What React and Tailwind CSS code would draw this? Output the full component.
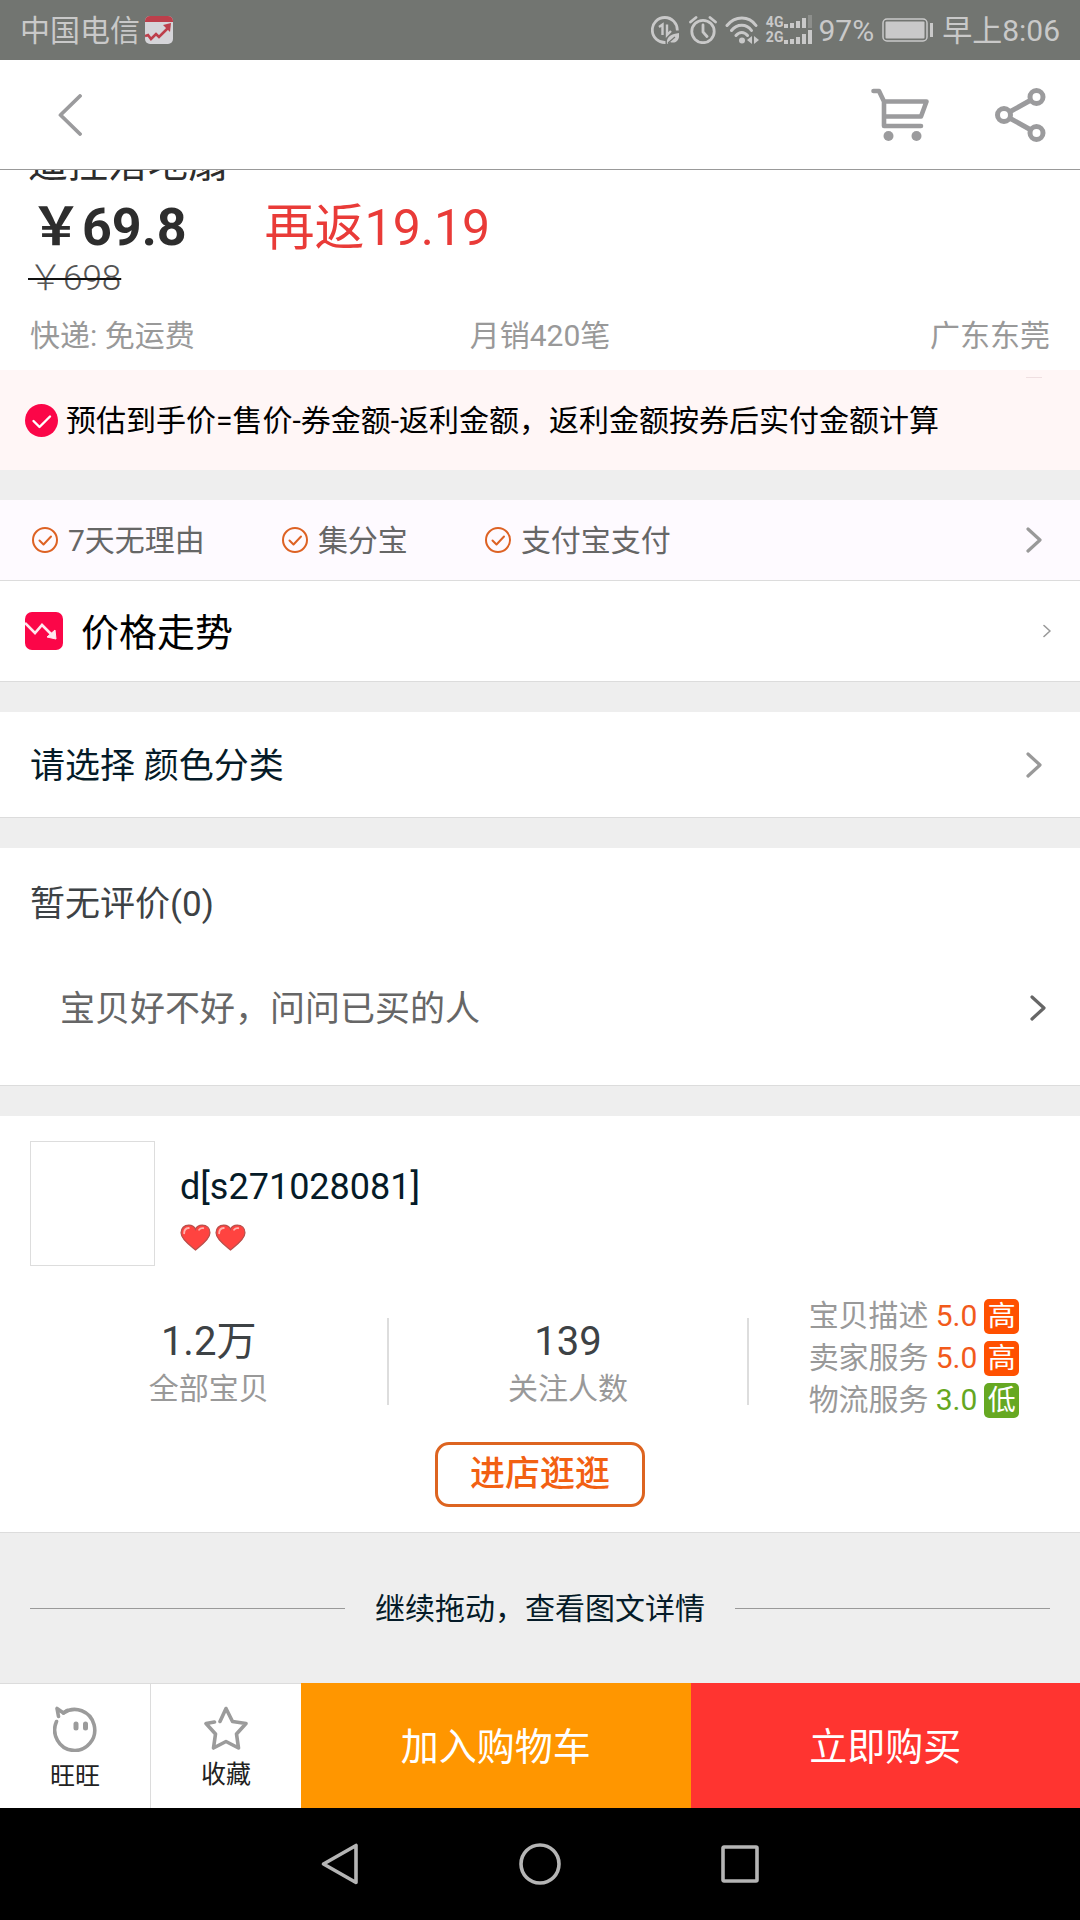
import React from 'react';

const services = ['7天无理由', '集分宝', '支付宝支付'];

const ratings = [
  { label: '宝贝描述', score: '5.0', level: '高', good: true },
  { label: '卖家服务', score: '5.0', level: '高', good: true },
  { label: '物流服务', score: '3.0', level: '低', good: false },
];

const stats = [
  { value: '1.2万', label: '全部宝贝' },
  { value: '139', label: '关注人数' },
];

const Chevron = ({ className }) => (
  <svg className={className} viewBox="0 0 16 26" fill="none" stroke="currentColor" strokeWidth="3.2" strokeLinecap="round" strokeLinejoin="round">
    <path d="M2 2l12 11L2 24" />
  </svg>
);

const Heart = () => (
  <svg className="w-[31px] h-[27px]" viewBox="0 0 30 26">
    <path d="M15 25C10 21 1 15 1 8.500C1 4 4 1 8.500 1C11.500 1 14 2.500 15 5C16 2.500 18.500 1 21.500 1C26 1 29 4 29 8.500C29 15 20 21 15 25Z" fill="#ff4340" stroke="#b8504c" strokeWidth="1.200" />
    <path d="M4 9C4 6 5.500 4 8.500 3.800M18.500 5.500C19.500 4.200 21 3.800 22.500 4" fill="none" stroke="#ffb3ae" strokeWidth="1.800" strokeLinecap="round" />
  </svg>
);

const StatusBar = () => (
  <div className="h-[60px] shrink-0 bg-[#727571] text-[#c9c9c9] text-[30px] leading-[40px] flex items-center pl-5 pr-5">
    <span className="pt-0.5">中国电信</span>
    <svg className="w-7 h-7 ml-[5px]" viewBox="0 0 28 28">
      <rect width="28" height="28" rx="5" fill="#d5d5d9" />
      <path d="M0 6V5a5 5 0 0 1 5-5h18a5 5 0 0 1 5 5v1z" fill="#bd3f4b" />
      <path d="M0 20l3-1 3 4 5-5 3 3 9-9" fill="none" stroke="#bd3f4b" strokeWidth="2.600" />
      <path d="M18 9l8-2-1 9z" fill="#bd3f4b" />
    </svg>
    <div className="flex-1" />
    {/* data saver */}
    <svg className="w-7 h-7" viewBox="0 0 28 28" fill="none" stroke="currentColor" strokeWidth="2.800">
      <path d="M26.300 14.500A12.500 12.500 0 1 0 14.500 26.500" />
      <path d="M8 11l3.500-2.500V19M16 8.500V19l4-4" strokeWidth="2.400" />
      <path d="M16 28c-1-7 4-10 12-11c1 7-3 11-9 9z" fill="currentColor" stroke="none" />
      <path d="M17 27l7-6" stroke="#727571" strokeWidth="1.200" />
    </svg>
    {/* alarm */}
    <svg className="w-7 h-7 ml-[10px]" viewBox="0 0 28 28" fill="none" stroke="currentColor" strokeWidth="2.800" strokeLinecap="round">
      <circle cx="14" cy="15.500" r="11.200" />
      <path d="M1.500 6L7 1.500M26.500 6L21 1.500M14 9v7l4 4.500" />
    </svg>
    {/* wifi */}
    <svg className="w-[34px] h-7 ml-2" viewBox="0 0 34 28" fill="none" stroke="currentColor" strokeWidth="3" strokeLinecap="round">
      <path d="M2 9.500C10-.5 24-.5 31 9.500M6.500 14.500c5.500-7 15-7 20 0M11 19.500c3.500-4 8-4 11.500 0" />
      <circle cx="17" cy="24.500" r="3" fill="currentColor" stroke="none" />
      <path d="M27 20v8l-5-4zM29 20v8l5-4z" fill="currentColor" stroke="none" />
    </svg>
    <div className="ml-[7px] flex flex-col text-[14px] leading-[15px] font-bold">
      <span>4G</span>
      <span>2G</span>
    </div>
    <svg className="w-[30px] h-[30px]" viewBox="0 0 30 30" fill="currentColor">
      <path d="M1 9h4v4H1zM7 8h4v5H7zM13 6h4v7h-4zM19 3h4v10h-4zM1 25h4v4H1zM7 24h4v5H7zM13 22h4v7h-4zM19 19h4v10h-4zM25 15h4v14h-4z" />
      <path d="M25 0h4v13h-4z" fill="#8d8f8c" />
    </svg>
    <span className="ml-[5px] pt-0.5">97%</span>
    <svg className="w-[52px] h-6 ml-2" viewBox="0 0 52 24">
      <rect x="1" y="1" width="44" height="22" rx="4" fill="none" stroke="currentColor" strokeWidth="1.500" />
      <rect x="3.500" y="3.500" width="39" height="17" rx="1" fill="currentColor" />
      <rect x="48" y="5" width="3" height="14" fill="currentColor" />
    </svg>
    <span className="ml-2 pt-0.5">早上8:06</span>
  </div>
);

const Header = () => (
  <header className="h-[110px] shrink-0 bg-white border-b border-[#999999] text-[#9b9b9d] flex items-center pl-[58px] pr-[34px]">
    <button aria-label="返回">
      <svg className="w-6 h-[42px]" viewBox="0 0 24 42" fill="none" stroke="currentColor" strokeWidth="3.800" strokeLinecap="round" strokeLinejoin="round">
        <path d="M22 2L2.500 21L22 40" />
      </svg>
    </button>
    <div className="flex-1" />
    <button aria-label="购物车">
      <svg className="w-[58px] h-[54px]" viewBox="0 0 58 54" fill="none" stroke="currentColor" strokeWidth="4.600" strokeLinecap="round" strokeLinejoin="round">
        <path d="M2.500 3h5.500L13 13.500v24.500h37M13 13.500h42.500L50 28.500H13" />
        <circle cx="17.500" cy="48" r="5" fill="currentColor" stroke="none" />
        <circle cx="45.500" cy="48" r="5" fill="currentColor" stroke="none" />
      </svg>
    </button>
    <button aria-label="分享" className="ml-[66px]">
      <svg className="w-[51px] h-[54px]" viewBox="0 0 51 54" fill="none" stroke="currentColor" strokeWidth="5">
        <circle cx="9" cy="27" r="6.500" />
        <circle cx="41.500" cy="9" r="6.500" />
        <circle cx="41.500" cy="45" r="6.500" />
        <path d="M14.500 24L36 12M14.500 30L36 42" />
      </svg>
    </button>
  </header>
);

const PriceInfo = () => (
  <section className="px-[30px] pb-[14px] overflow-hidden">
    <h1 className="-mt-[30px] -ml-[2px] text-[40px] leading-[48px] text-[#2d2d2d]">遥控落地扇</h1>
    <div className="mt-[10px] flex items-center leading-[60px]">
      <span className="text-[52px] font-bold text-[#2d2d2d]">￥69.8</span>
      <span className="ml-[78px] text-[50px] text-[#e93b38]">再返19.19</span>
    </div>
    <div className="-ml-[2px] text-[35px] leading-[42px] font-light text-[#555]">
      <del className="decoration-[#111] decoration-2">￥698</del>
    </div>
    <div className="mt-4 grid grid-cols-3 text-[30px] leading-[40px] text-[#999]">
      <span>快递: 免运费</span>
      <span className="text-center">月销420笔</span>
      <span className="text-right">广东东莞</span>
    </div>
  </section>
);

const ShopCard = () => (
  <section className="pt-[25px] pb-[25px] border-b border-[#dcdcdc]">
    <div className="flex pl-[30px]">
      <div className="w-[125px] h-[125px] border border-[#dddddd]" />
      <div className="ml-[25px] pt-[21px]">
        <h2 className="text-[36px] leading-[50px] text-[#051b28]">d[s271028081]</h2>
        <div className="mt-3 flex gap-1">
          <Heart />
          <Heart />
        </div>
      </div>
    </div>
    <div className="mt-[29px] pl-[30px] grid grid-cols-[90fr_90fr_83fr] items-start">
      {stats.map((stat) => (
        <div key={stat.label} className="mt-[23px] h-[87px] border-r-2 border-[#dddddd] text-center">
          <p className="text-[40px] leading-[48px] text-[#3d4245]">{stat.value}</p>
          <p className="text-[30px] leading-[45px] text-[#999]">{stat.label}</p>
        </div>
      ))}
      <div className="pl-[60px] text-[30px] leading-[42px]">
        {ratings.map((rating) => (
          <div key={rating.label} className="flex items-center">
            <span className="text-[#999]">{rating.label}</span>
            <span className={`ml-[7px] ${rating.good ? 'text-[#f25a1b]' : 'text-[#65a71f]'}`}>{rating.score}</span>
            <span className={`ml-[7px] w-[35px] h-[35px] rounded-[5px] text-[28px] leading-[35px] text-center text-white ${rating.good ? 'bg-[#ff5000]' : 'bg-[#66a822]'}`}>
              {rating.level}
            </span>
          </div>
        ))}
      </div>
    </div>
    <button className="mt-[21px] mx-auto block w-[210px] h-[65px] rounded-[14px] border-[3px] border-[#dd6420] text-[35px] leading-[59px] font-medium text-[#f26012]">
      进店逛逛
    </button>
  </section>
);

const BottomBar = () => (
  <div className="h-[125px] shrink-0 flex">
    <button className="w-[151px] border-t border-r border-[#dcdcdc] bg-white flex flex-col items-center pt-[22px]">
      <svg className="w-11 h-[46px]" viewBox="0 0 44 46" fill="none" stroke="#9b9b9b" strokeWidth="3.600" strokeLinecap="round" strokeLinejoin="round">
        <path d="M3.500 15.500A20 20.500 0 1 0 10.500 7L4 2.500L5.500 10.500" />
        <path d="M10.500 7A20 20.500 0 0 1 14 4.500" />
        <path d="M23 18v4M32.500 18v4" strokeWidth="5" />
      </svg>
      <span className="mt-2 text-[25px] leading-[34px] text-[#222]">旺旺</span>
    </button>
    <button className="w-[150px] border-t border-[#dcdcdc] bg-white flex flex-col items-center pt-[22px]">
      <svg className="w-11 h-11" viewBox="0 0 44 44" fill="none" stroke="#9b9b9b" strokeWidth="3.600" strokeLinecap="round" strokeLinejoin="round">
        <path d="M16 15.500L22 2.500L28.500 15.500L42 17.500L32.500 28L34.500 42L22 35.500L9.500 42L11.500 28L2 17.500L10.500 16" />
      </svg>
      <span className="mt-2 text-[25px] leading-[34px] text-[#222]">收藏</span>
    </button>
    <button className="flex-1 pt-1 bg-[#ff9600] text-[38px] text-white">加入购物车</button>
    <button className="flex-1 pt-1 bg-[#ff3430] text-[38px] text-white">立即购买</button>
  </div>
);

const NavBar = () => (
  <nav className="h-28 shrink-0 bg-black text-[#b5b5b5] flex items-center justify-center gap-[158px]">
    <button aria-label="后退">
      <svg className="w-[42px] h-[42px]" viewBox="0 0 42 42" fill="none" stroke="currentColor" strokeWidth="3.600" strokeLinejoin="round">
        <path d="M37 2.500v37L4.500 21z" />
      </svg>
    </button>
    <button aria-label="主页">
      <svg className="w-[42px] h-[42px]" viewBox="0 0 42 42" fill="none" stroke="currentColor" strokeWidth="3.600">
        <circle cx="21" cy="21" r="19" />
      </svg>
    </button>
    <button aria-label="最近任务">
      <svg className="w-[42px] h-[42px]" viewBox="0 0 42 42" fill="none" stroke="currentColor" strokeWidth="3.600" strokeLinejoin="round">
        <rect x="4" y="4" width="34" height="34" rx="1" />
      </svg>
    </button>
  </nav>
);

const App = () => {
  return (
    <div className="min-h-screen flex flex-col bg-[#eeeeee] font-['Roboto','Noto_Sans_CJK_SC',sans-serif]">
      <StatusBar />
      <Header />
      <main className="flex-1 flex flex-col [&>section]:bg-white">
        <PriceInfo />

        <div className="relative h-[100px] flex items-center pl-[25px] bg-[#fff6f6]">
          <svg className="w-[33px] h-[33px]" viewBox="0 0 33 33">
            <circle cx="16.500" cy="16.500" r="16.500" fill="#fb0648" />
            <path d="M8.500 17l6 6L25 12.500" fill="none" stroke="#fff" strokeWidth="2.400" strokeLinecap="round" strokeLinejoin="round" />
          </svg>
          <p className="ml-2 pt-0.5 text-[30px] leading-[40px] text-black">预估到手价=售价-券金额-返利金额，返利金额按券后实付金额计算</p>
          <span className="absolute top-[7px] right-[38px] w-4 h-px bg-[#efdfe1]" />
        </div>

        <button className="mt-[30px] h-[81px] flex items-center pl-8 pr-[38px] bg-[#fefaff] border-b border-[#dcdcdc] text-[30px] leading-[40px] text-[#666]">
          <span className="flex gap-[77px]">
            {services.map((service) => (
              <span key={service} className="flex items-center gap-[10px]">
                <svg className="w-[26px] h-[26px]" viewBox="0 0 26 26" fill="none" stroke="#dd6224" strokeWidth="2" strokeLinecap="round" strokeLinejoin="round">
                  <circle cx="13" cy="13" r="12" />
                  <path d="M7.500 13.500l4 4L19 9.500" />
                </svg>
                <span className="pt-0.5">{service}</span>
              </span>
            ))}
          </span>
          <Chevron className="ml-auto w-4 h-[26px] text-[#999]" />
        </button>

        <button className="h-[101px] flex items-center pl-[25px] pr-[29px] bg-white border-b border-[#dcdcdc]">
          <svg className="w-[38px] h-[38px]" viewBox="0 0 38 38">
            <rect width="38" height="38" rx="7" fill="#fb0648" />
            <path d="M0 11l10 10l7-8l10 10" fill="none" stroke="#ffe9ee" strokeWidth="2.600" />
            <path d="M30 18l1 9l-9-2z" fill="#ffe9ee" stroke="#ffe9ee" />
          </svg>
          <span className="ml-[18px] pt-1 text-[38px] leading-[48px] text-black">价格走势</span>
          <Chevron className="ml-auto w-2 h-[14px] text-[#999]" />
        </button>

        <button className="mt-[30px] h-[106px] flex items-center pl-[30px] pr-[38px] bg-white border-b border-[#dcdcdc]">
          <span className="pt-1 text-[35px] leading-[48px] text-[#051b28]">请选择 颜色分类</span>
          <Chevron className="ml-auto w-4 h-[26px] text-[#999]" />
        </button>

        <section className="mt-[30px] pb-[27px] border-b border-[#dcdcdc]">
          <h2 className="pl-[30px] pt-1 text-[35px] leading-[106px] text-[#3d4245]">暂无评价(0)</h2>
          <button className="w-full h-[100px] flex items-center pl-[60px] pr-[34px] text-[35px] leading-[48px] text-[#666]">
            <span className="pt-1">宝贝好不好，问问已买的人</span>
            <Chevron className="ml-auto w-4 h-[26px]" />
          </button>
        </section>

        <div className="h-[30px]" />
        <ShopCard />

        <div className="h-[150px] px-[30px] flex items-center gap-[30px] text-[30px] leading-[40px] text-[#051b28]">
          <span className="flex-1 h-px bg-[#999]" />
          <span className="pt-0.5">继续拖动，查看图文详情</span>
          <span className="flex-1 h-px bg-[#999]" />
        </div>
      </main>
      <BottomBar />
      <NavBar />
    </div>
  );
};

export default App;
